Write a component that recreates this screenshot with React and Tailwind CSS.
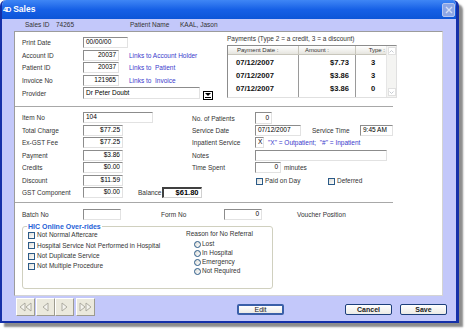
import React from 'react'

const FONT = "font-['Liberation_Sans',Arial,sans-serif]"

function Field({ w, value = '', align = 'right', bold = false, h = 'h-[11px]', thick = false }) {
  return (
    <div
      className={`${w} ${h} shrink-0 bg-white flex items-center px-[2px] leading-none ${
        thick
          ? 'border border-t-[#404040] border-l-[#404040] border-b-[#d0d0d0] border-r-[#d0d0d0] border-t-2 border-l-2'
          : 'border border-t-[#8c8c8c] border-l-[#8c8c8c] border-b-[#e2e2e2] border-r-[#e2e2e2]'
      } ${align === 'right' ? 'justify-end' : 'justify-start'} ${bold ? 'font-bold text-[7.5px]' : ''}`}
    >
      {value}
    </div>
  )
}

function Label({ w, children, className = '' }) {
  return <span className={`${w} shrink-0 text-[#333] ${className}`}>{children}</span>
}

function Check({ label, className = '' }) {
  return (
    <div className={`flex items-center gap-[2px] ${className}`}>
      <span className="w-[7px] h-[7px] border border-[#2b5a87] bg-gradient-to-br from-[#dcdcd6] to-white shrink-0" />
      <span className="text-[#333]">{label}</span>
    </div>
  )
}

function Radio({ label }) {
  return (
    <div className="flex items-center gap-[1px] h-[9px]">
      <span className="w-[7px] h-[7px] rounded-full border border-[#2b5a87] bg-gradient-to-br from-[#dcdcd6] to-white shrink-0" />
      <span className="text-[#333]">{label}</span>
    </div>
  )
}

function Sep() {
  return (
    <div className="w-[378px] h-[2px] border-t border-[#a8a8a8] border-b border-b-white bg-[#e6e6e6]" />
  )
}

function Tri({ dir = 'left', double = false }) {
  const one = dir === 'left' ? 'M6 1 L1 5 L6 9 Z' : 'M1 1 L6 5 L1 9 Z'
  const two = dir === 'left' ? 'M12 1 L7 5 L12 9 Z' : 'M7 1 L12 5 L7 9 Z'
  return (
    <svg width={double ? 13 : 7} height="10" viewBox={`0 0 ${double ? 13 : 7} 10`}>
      <path d={one} fill="#f4f3ee" stroke="#a6a49a" strokeWidth="0.9" />
      {double && <path d={two} fill="#f4f3ee" stroke="#a6a49a" strokeWidth="0.9" />}
    </svg>
  )
}

function NavBtn({ children, w = 'w-[19px]' }) {
  return (
    <div className={`${w} h-[18px] bg-[#ebe9dd] border border-t-white border-l-white border-b-[#9d9b8f] border-r-[#9d9b8f] flex items-center justify-center`}>
      {children}
    </div>
  )
}

function Btn({ children, def = false, bold = true }) {
  return (
    <div
      className={`w-[47px] h-[11px] rounded-[2px] flex items-center justify-center bg-gradient-to-b from-white to-[#ecebe5] text-[7px] text-[#222] ${
        def ? 'border-2 border-[#3a5fa8]' : 'border border-[#1d3f7a]'
      } ${bold ? 'font-bold' : ''}`}
    >
      {children}
    </div>
  )
}

export default function App() {
  const payments = [
    { date: '07/12/2007', amount: '$7.73', type: '3' },
    { date: '07/12/2007', amount: '$3.86', type: '3' },
    { date: '07/12/2007', amount: '$3.86', type: '0' }
  ]

  return (
    <div className={`w-[466px] h-[331px] bg-white ${FONT} text-[6.5px] leading-none`}>
      <div className="w-[459px] h-[323px] flex flex-col rounded-t-[6px] overflow-hidden border-r-[3px] border-b-[2px] border-l-[2px] border-[#1530a8] shadow-[4px_4px_2px_rgba(0,0,0,0.45)]">
        {/* Title bar */}
        <div className="h-[19px] shrink-0 flex items-center justify-between bg-gradient-to-b from-[#3f86f5] via-[#1660e6] to-[#0c55d8] pl-[1px] pr-[1px]">
          <div className="flex items-center gap-[2px] text-white">
            <span className="text-[7.5px] font-bold tracking-[-1.2px] pr-[1px]">4D</span>
            <span className="text-[8.5px] font-bold">Sales</span>
          </div>
          <div className="w-[13px] h-[14px] rounded-[2px] bg-[#8ca6e6] border border-[#b6c6ef] flex items-center justify-center">
            <svg width="8" height="8" viewBox="0 0 8 8">
              <path d="M1 1 L7 7 M7 1 L1 7" stroke="#d6def5" strokeWidth="1.4" />
            </svg>
          </div>
        </div>

        {/* Body */}
        <div className="flex-1 bg-[#c3c8fa] flex flex-col pl-[12px] pr-[13px]">
          <div className="h-[12px] flex items-center text-[#333] pl-[11px]">
            <span className="w-[31px]">Sales ID</span>
            <span className="w-[74px]">74265</span>
            <span className="w-[50px]">Patient Name</span>
            <span>KAAL, Jason</span>
          </div>

          {/* White panel */}
          <div className="w-[429px] h-[265px] bg-white border border-t-[#9c9c9c] border-l-[#9c9c9c] border-b-[#d4d4d4] border-r-[#d4d4d4] flex flex-col">
            {/* Top section */}
            <div className="h-[74px] flex">
              <div className="w-[212px] pl-[7px] pt-[5px] flex flex-col">
                <div className="h-[12.5px] flex items-start">
                  <Label w="w-[61px]" className="pt-[3px]">Print Date</Label>
                  <Field w="w-[45px]" value="00/00/00" align="left" />
                </div>
                <div className="h-[12.5px] flex items-start">
                  <Label w="w-[61px]" className="pt-[3px]">Account ID</Label>
                  <Field w="w-[36px]" value="20037" />
                  <span className="ml-[10px] pt-[3px] text-[#3a3acc]">Links to Account Holder</span>
                </div>
                <div className="h-[12.5px] flex items-start">
                  <Label w="w-[61px]" className="pt-[3px]">Patient ID</Label>
                  <Field w="w-[36px]" value="20037" />
                  <span className="ml-[10px] pt-[3px] text-[#3a3acc]">Links to&nbsp; Patient</span>
                </div>
                <div className="h-[12.5px] flex items-start">
                  <Label w="w-[61px]" className="pt-[3px]">Invoice No</Label>
                  <Field w="w-[36px]" value="121965" />
                  <span className="ml-[10px] pt-[3px] text-[#3a3acc]">Links to&nbsp; Invoice</span>
                </div>
                <div className="h-[14px] flex items-start">
                  <Label w="w-[61px]" className="pt-[4px]">Provider</Label>
                  <Field w="w-[117px]" h="h-[12px]" value="Dr Peter Doubt" align="left" />
                  <div className="ml-[3px] mt-[4px] w-[10px] h-[9px] border border-black bg-white flex flex-col items-center justify-center gap-[1px]">
                    <svg width="6" height="3" viewBox="0 0 6 3">
                      <path d="M0 0 L6 0 L3 3 Z" fill="#000" />
                    </svg>
                    <span className="w-[6px] h-[1px] bg-black" />
                  </div>
                </div>
              </div>

              <div className="pt-[3px] flex flex-col">
                <span className="text-[#333] h-[10px] pt-[1px]">Payments (Type 2 = a credit, 3 = a discount)</span>
                <div className="w-[170px] h-[53px] border border-t-[#8c8c8c] border-l-[#8c8c8c] border-b-[#e0e0e0] border-r-[#e0e0e0] flex">
                  <div className="flex-1 flex flex-col relative">
                    <div className="h-[9px] flex bg-gradient-to-b from-white to-[#e6e5df] border-b border-[#c8c6bc] text-[#333] text-[6px]">
                      <span className="w-[71px] pl-[9px] pt-[1px] border-r border-[#c8c6bc]">Payment Date :</span>
                      <span className="w-[57px] pl-[6px] pt-[1px] border-r border-[#c8c6bc]">Amount :</span>
                      <span className="flex-1 text-right pr-[1px] pt-[1px]">Type :</span>
                    </div>
                    <div className="flex-1 flex">
                      <div className="w-[71px] border-r border-[#9a9a9a] flex flex-col pt-[1px]">
                        {payments.map((p, i) => (
                          <span key={i} className="h-[13px] flex items-center pl-[8px] font-bold text-[7.6px] text-[#111]">{p.date}</span>
                        ))}
                      </div>
                      <div className="w-[57px] border-r border-[#9a9a9a] flex flex-col pt-[1px]">
                        {payments.map((p, i) => (
                          <span key={i} className="h-[13px] flex items-center justify-end pr-[6px] font-bold text-[7.6px] text-[#111]">{p.amount}</span>
                        ))}
                      </div>
                      <div className="flex-1 flex flex-col pt-[1px]">
                        {payments.map((p, i) => (
                          <span key={i} className="h-[13px] flex items-center pl-[15px] font-bold text-[7.6px] text-[#111]">{p.type}</span>
                        ))}
                      </div>
                    </div>
                  </div>
                  <div className="w-[10px] bg-[#f4f4f2] border-l border-[#e6e6e6] flex flex-col justify-between items-center py-[1px]">
                    <div className="w-[8px] h-[8px] border border-[#e0e0e0] bg-white flex items-center justify-center">
                      <svg width="5" height="3" viewBox="0 0 5 3"><path d="M0.5 2.5 L2.5 0.5 L4.5 2.5" stroke="#c0c4cc" fill="none" strokeWidth="0.9" /></svg>
                    </div>
                    <div className="w-[8px] h-[8px] border border-[#e0e0e0] bg-white flex items-center justify-center">
                      <svg width="5" height="3" viewBox="0 0 5 3"><path d="M0.5 0.5 L2.5 2.5 L4.5 0.5" stroke="#c0c4cc" fill="none" strokeWidth="0.9" /></svg>
                    </div>
                  </div>
                </div>
              </div>
            </div>

            <Sep />

            {/* Middle section */}
            <div className="h-[94px] flex pt-[4px]">
              <div className="w-[177px] pl-[7px] flex flex-col">
                {[
                  ['Item No', '104', 'w-[70px]', 'left'],
                  ['Total Charge', '$77.25', 'w-[40px]', 'right'],
                  ['Ex-GST Fee', '$77.25', 'w-[40px]', 'right'],
                  ['Payment', '$3.86', 'w-[40px]', 'right'],
                  ['Credits', '$0.00', 'w-[40px]', 'right'],
                  ['Discount', '$11.59', 'w-[40px]', 'right']
                ].map(([l, v, w, a]) => (
                  <div key={l} className="h-[12.5px] flex items-start">
                    <Label w="w-[61px]" className="pt-[3px]">{l}</Label>
                    <Field w={w} value={v} align={a} />
                  </div>
                ))}
                <div className="h-[12.5px] flex items-start">
                  <Label w="w-[61px]" className="pt-[3px]">GST Component</Label>
                  <Field w="w-[40px]" value="$0.00" />
                  <span className="ml-[15px] w-[28px] pt-[3px] text-[#333]">Balance</span>
                  <Field w="w-[40px]" value="$61.80" bold thick />
                </div>
              </div>

              <div className="flex flex-col">
                <div className="h-[12.5px] flex items-start">
                  <Label w="w-[63px]" className="pt-[4px]">No. of Patients</Label>
                  <Field w="w-[17px]" h="h-[12px]" value="0" />
                </div>
                <div className="h-[12.5px] flex items-start">
                  <Label w="w-[63px]" className="pt-[3px]">Service Date</Label>
                  <Field w="w-[46px]" value="07/12/2007" align="left" />
                  <span className="ml-[11px] w-[48px] pt-[3px] text-[#333]">Service Time</span>
                  <Field w="w-[33px]" value="9:45 AM" align="left" />
                </div>
                <div className="h-[12.5px] flex items-start">
                  <Label w="w-[63px]" className="pt-[3px]">Inpatient Service</Label>
                  <Field w="w-[9px]" value="X" align="left" />
                  <span className="ml-[4px] pt-[3px] text-[#3a3acc]">"X" = Outpatient;&nbsp; "#" = Inpatient</span>
                </div>
                <div className="h-[12.5px] flex items-start">
                  <Label w="w-[63px]" className="pt-[3px]">Notes</Label>
                  <Field w="w-[132px]" value="" />
                </div>
                <div className="h-[12.5px] flex items-start">
                  <Label w="w-[63px]" className="pt-[3px]">Time Spent</Label>
                  <Field w="w-[26px]" value="0" />
                  <span className="ml-[3px] pt-[3px] text-[#333]">minutes</span>
                </div>
                <div className="h-[12.5px] flex items-center pl-[64px] pt-[1px]">
                  <Check label="Paid on Day" className="w-[72px]" />
                  <Check label="Deferred" />
                </div>
              </div>
            </div>

            <Sep />

            {/* Bottom section */}
            <div className="flex flex-col pl-[7px] pt-[5px]">
              <div className="h-[12px] flex items-start">
                <Label w="w-[61px]" className="pt-[3px]">Batch No</Label>
                <Field w="w-[38px]" value="" />
                <span className="ml-[40px] w-[63px] pt-[3px] text-[#333]">Form No</span>
                <Field w="w-[38px]" value="0" />
                <span className="ml-[35px] pt-[3px] text-[#333]">Voucher Position</span>
              </div>

              <fieldset className="mt-[2px] w-[251px] h-[66px] border border-[#d0d0bf] rounded-[3px] px-[5px] pb-0 flex">
                <legend className="px-[1px] text-[7px] font-bold text-[#1f5fd6] -ml-[1px]">HIC Online Over-rides</legend>
                <div className="w-[158px] flex flex-col pt-[2px] gap-[3.3px]">
                  <Check label="Not Normal Aftercare" />
                  <Check label="Hospital Service Not Performed in Hospital" />
                  <Check label="Not Duplicate Service" />
                  <Check label="Not Multiple Procedure" />
                </div>
                <div className="flex flex-col pt-[1px]">
                  <span className="text-[#333] h-[9px]">Reason for No Referral</span>
                  <div className="pl-[8px] flex flex-col">
                    <Radio label="Lost" />
                    <Radio label="In Hospital" />
                    <Radio label="Emergency" />
                    <Radio label="Not Required" />
                  </div>
                </div>
              </fieldset>
            </div>
          </div>

          {/* Bottom bar */}
          <div className="flex items-start pt-[2px] pl-[2px]">
            <div className="flex">
              <NavBtn><Tri dir="left" double /></NavBtn>
              <div className="w-[1px]" />
              <NavBtn><Tri dir="left" /></NavBtn>
              <NavBtn><Tri dir="right" /></NavBtn>
              <div className="w-[2px]" />
              <NavBtn><Tri dir="right" double /></NavBtn>
            </div>
            <div className="ml-[142px] mt-[6px]">
              <Btn def bold={false}>Edit</Btn>
            </div>
            <div className="ml-[61px] mt-[6px]">
              <Btn>Cancel</Btn>
            </div>
            <div className="ml-[8px] mt-[6px]">
              <Btn>Save</Btn>
            </div>
          </div>
        </div>
      </div>
    </div>
  )
}
